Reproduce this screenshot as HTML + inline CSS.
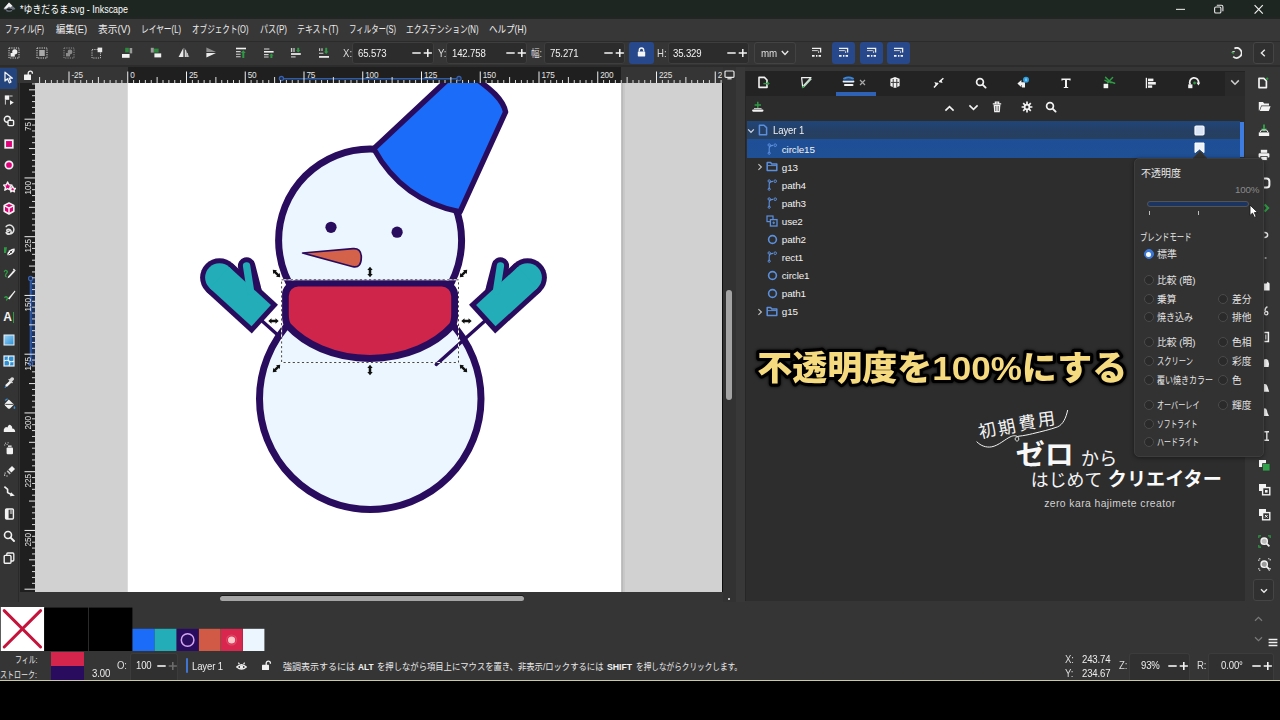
<!DOCTYPE html>
<html lang="ja"><head><meta charset="utf-8"><title>*ゆきだるま.svg - Inkscape</title>
<style>
html,body{margin:0;padding:0;}
body{width:1280px;height:720px;overflow:hidden;background:#353535;position:relative;
 font-family:"Liberation Sans",sans-serif;font-size:10px;color:#e6e6e6;}
.a{position:absolute;}
.t{position:absolute;white-space:nowrap;line-height:1;}
svg{display:block;}
svg text{font-family:"Liberation Sans","Noto Sans CJK JP",sans-serif;}

#title{left:0;top:0;width:1280px;height:17px;background:#1d2621;}
#tsep{left:0;top:16.5px;width:1280px;height:2.5px;background:#212523;}
#menu{left:0;top:19px;width:1280px;height:22px;background:#373737;}
#tbar{left:0;top:41px;width:1280px;height:26px;background:#353535;border-top:1px solid #2b2b2b;box-sizing:border-box;}
#tbar2{left:0;top:64.5px;width:1280px;height:2.5px;background:#2c2c2c;}
.fld{position:absolute;top:41.6px;height:22.6px;background:#2c2c2c;border:1px solid #3e3e3e;border-radius:3px;box-sizing:border-box;}
.num{position:absolute;white-space:nowrap;line-height:1;font-size:10.2px;color:#f2f2f2;letter-spacing:-0.15px;transform-origin:0 50%;transform:scaleX(.94);}
.lbl{position:absolute;white-space:nowrap;line-height:1;font-size:10.2px;color:#dcdcdc;transform-origin:0 50%;transform:scaleX(.94);}
.bbtn{position:absolute;top:41.6px;height:22.4px;background:#27488a;border-radius:3px;}

#ltools{left:0;top:67px;width:18px;height:535px;background:#343434;}
#hruler{left:18px;top:67px;width:704px;height:16px;background:#353535;overflow:hidden;}
#vruler{left:20px;top:83px;width:15px;height:509px;background:#1f1f1f;overflow:hidden;}
#canvas{left:35px;top:83px;width:687px;height:509px;background:#d1d1d1;overflow:hidden;}
#cvedge{left:722px;top:83px;width:1px;height:509px;background:#0c0c0c;}
#vtrough{left:723px;top:67px;width:13px;height:535px;background:#323232;}
#vsep{left:736px;top:67px;width:9px;height:535px;background:#383838;}
.rl{position:absolute;color:#e4e4e4;font-size:8.2px;line-height:1;white-space:nowrap;letter-spacing:-0.1px;}

#panel{left:745px;top:71px;width:499.6px;height:530px;background:#2d2d2d;}
#ptabs{left:745.5px;top:71px;width:499.1px;height:25px;background:#232323;}
#ptool{left:745.5px;top:96px;width:499.1px;height:24.6px;background:#2c2c2c;}
#pleft{left:745px;top:71px;width:1px;height:530px;background:#262626;}
.row{position:absolute;left:747px;width:493px;height:18.4px;}
.rt{position:absolute;white-space:nowrap;line-height:1;font-size:9.9px;color:#f1f1f1;letter-spacing:-0.12px;}
#pop{left:1134.3px;top:158px;width:129.5px;height:298.5px;background:#323232;border:1px solid #3d3d3d;border-radius:5px;box-sizing:border-box;box-shadow:0 1px 4px rgba(0,0,0,.45);}
.rad{position:absolute;width:10px;height:10px;border-radius:50%;background:#2a2a2a;border:1px solid #4a4a4a;box-sizing:border-box;}
#rstrip{left:1244.6px;top:67px;width:35.4px;height:535px;background:#353535;}

#hscroll{left:220.4px;top:596px;width:304px;height:5.4px;border-radius:3px;background:#a5a5a5;box-shadow:0 -1px 0 #1a1a1a;}
#vscroll{left:726.4px;top:290px;width:5.2px;height:110px;border-radius:3px;background:#a4a4a4;}
#status{left:0;top:651px;width:1280px;height:28.6px;background:#353535;}
#yline{left:0;top:679.8px;width:1280px;height:1.4px;background:#c9c9a4;}
#black{left:0;top:681.2px;width:1280px;height:39px;background:#000;}
.sw{position:absolute;top:628.8px;height:22.2px;}
.sfld{position:absolute;top:652.5px;height:27px;background:#303030;border:1px solid #3c3c3c;border-bottom:none;border-radius:3px 3px 0 0;box-sizing:border-box;}
.st{position:absolute;white-space:nowrap;line-height:1;font-size:10.2px;color:#ededed;letter-spacing:-0.15px;transform-origin:0 50%;transform:scaleX(.94);}

#cap{filter:drop-shadow(0 0 1.6px rgba(0,0,0,.9));}
</style></head>
<body>
<div id="title" class="a"></div><div id="tsep" class="a"></div>
<svg class="a" style="left:2.5px;top:2.4px" width="13" height="11" viewBox="0 0 13 11"><path d="M6 0.6L12.2 6.4Q12.6 7.4 11.4 7.6L9 8Q10 9.2 8.2 9.6Q6 10 4 9.6Q2.4 9.2 3.4 8L1.2 7.6Q0.2 7.3 0.7 6.4Z" fill="#6d7480"/><path d="M6 0.6L9.4 3.8L7.4 5.4L6 4.6L3.4 6.8L0.8 6.6Z" fill="#f2f2f2"/><path d="M3 7Q6 6 9.6 7.2Q8 8.8 6.2 8.4Q4.6 8.8 3 7Z" fill="#151a18"/></svg>
<svg class="tx" style="position:absolute;left:13.60px;top:-3.90px;overflow:visible;" width="120.00" height="26.84" viewBox="-6.00 0.00 120.00 26.84" role="img" aria-label="*ゆきだるま.svg - Inkscape"><title>*ゆきだるま.svg - Inkscape</title><text x="0" y="16.6" font-size="10.6" fill="#ffffff" textLength="108" lengthAdjust="spacingAndGlyphs">*ゆきだるま.svg - Inkscape</text></svg>
<svg class="a" style="left:1160px;top:0" width="120" height="18" viewBox="1160 0 120 18"><path d="M1176 9.4H1185" stroke="#cfd2d0" stroke-width="1.2"/><rect x="1214.6" y="7" width="6.3" height="6" rx="1.3" fill="none" stroke="#e8e8e8" stroke-width="1.1"/><path d="M1216.8 5.2H1221.4Q1222.9 5.2 1222.9 6.7V11.2" fill="none" stroke="#e8e8e8" stroke-width="1.1"/><path d="M1254.6 5.2L1262.8 13.6M1262.8 5.2L1254.6 13.6" stroke="#f0f0f0" stroke-width="1.2"/></svg>
<div id="menu" class="a"></div>
<svg class="tx" style="position:absolute;left:-1.00px;top:17.10px;overflow:visible;" width="51.00" height="26.28" viewBox="-6.00 0.00 51.00 26.28" role="img" aria-label="ファイル(F)"><title>ファイル(F)</title><text x="0" y="16.2" font-size="10.2" fill="#ededed" textLength="39" lengthAdjust="spacingAndGlyphs">ファイル(F)</text></svg>
<svg class="tx" style="position:absolute;left:50.00px;top:17.10px;overflow:visible;" width="43.00" height="26.28" viewBox="-6.00 0.00 43.00 26.28" role="img" aria-label="編集(E)"><title>編集(E)</title><text x="0" y="16.2" font-size="10.2" fill="#ededed" textLength="31" lengthAdjust="spacingAndGlyphs">編集(E)</text></svg>
<svg class="tx" style="position:absolute;left:92.00px;top:17.10px;overflow:visible;" width="44.50" height="26.28" viewBox="-6.00 0.00 44.50 26.28" role="img" aria-label="表示(V)"><title>表示(V)</title><text x="0" y="16.2" font-size="10.2" fill="#ededed" textLength="32.5" lengthAdjust="spacingAndGlyphs">表示(V)</text></svg>
<svg class="tx" style="position:absolute;left:135.00px;top:17.10px;overflow:visible;" width="52.00" height="26.28" viewBox="-6.00 0.00 52.00 26.28" role="img" aria-label="レイヤー(L)"><title>レイヤー(L)</title><text x="0" y="16.2" font-size="10.2" fill="#ededed" textLength="40" lengthAdjust="spacingAndGlyphs">レイヤー(L)</text></svg>
<svg class="tx" style="position:absolute;left:186.00px;top:17.10px;overflow:visible;" width="68.50" height="26.28" viewBox="-6.00 0.00 68.50 26.28" role="img" aria-label="オブジェクト(O)"><title>オブジェクト(O)</title><text x="0" y="16.2" font-size="10.2" fill="#ededed" textLength="56.5" lengthAdjust="spacingAndGlyphs">オブジェクト(O)</text></svg>
<svg class="tx" style="position:absolute;left:253.50px;top:17.10px;overflow:visible;" width="39.00" height="26.28" viewBox="-6.00 0.00 39.00 26.28" role="img" aria-label="パス(P)"><title>パス(P)</title><text x="0" y="16.2" font-size="10.2" fill="#ededed" textLength="27" lengthAdjust="spacingAndGlyphs">パス(P)</text></svg>
<svg class="tx" style="position:absolute;left:290.50px;top:17.10px;overflow:visible;" width="53.50" height="26.28" viewBox="-6.00 0.00 53.50 26.28" role="img" aria-label="テキスト(T)"><title>テキスト(T)</title><text x="0" y="16.2" font-size="10.2" fill="#ededed" textLength="41.5" lengthAdjust="spacingAndGlyphs">テキスト(T)</text></svg>
<svg class="tx" style="position:absolute;left:342.50px;top:17.10px;overflow:visible;" width="59.00" height="26.28" viewBox="-6.00 0.00 59.00 26.28" role="img" aria-label="フィルター(S)"><title>フィルター(S)</title><text x="0" y="16.2" font-size="10.2" fill="#ededed" textLength="47" lengthAdjust="spacingAndGlyphs">フィルター(S)</text></svg>
<svg class="tx" style="position:absolute;left:399.50px;top:17.10px;overflow:visible;" width="84.50" height="26.28" viewBox="-6.00 0.00 84.50 26.28" role="img" aria-label="エクステンション(N)"><title>エクステンション(N)</title><text x="0" y="16.2" font-size="10.2" fill="#ededed" textLength="72.5" lengthAdjust="spacingAndGlyphs">エクステンション(N)</text></svg>
<svg class="tx" style="position:absolute;left:482.50px;top:17.10px;overflow:visible;" width="49.50" height="26.28" viewBox="-6.00 0.00 49.50 26.28" role="img" aria-label="ヘルプ(H)"><title>ヘルプ(H)</title><text x="0" y="16.2" font-size="10.2" fill="#ededed" textLength="37.5" lengthAdjust="spacingAndGlyphs">ヘルプ(H)</text></svg>
<div id="tbar" class="a"></div><div id="tbar2" class="a"></div>
<svg class="a" style="left:8.00px;top:46.50px" width="12" height="12" viewBox="0 0 12 12"><rect x="1" y="1" width="10" height="10" fill="none" stroke="#d8d8d8" stroke-width="1" stroke-dasharray="1.2 1.1"/><circle cx="6.8" cy="4.8" r="2.6" fill="#f0f0f0"/><rect x="2.6" y="6" width="4.2" height="3.6" fill="#f0f0f0"/></svg><svg class="a" style="left:35.50px;top:46.50px" width="12" height="12" viewBox="0 0 12 12"><rect x="1" y="1" width="10" height="10" fill="none" stroke="#d8d8d8" stroke-width="1" stroke-dasharray="1.2 1.1"/><path d="M3 4H9M3 6H9M3 8H9" stroke="#e8e8e8" stroke-width="1.1"/><rect x="4" y="3" width="4" height="6" fill="#bdbdbd" opacity=".6"/></svg><svg class="a" style="left:62.50px;top:46.50px" width="12" height="12" viewBox="0 0 12 12"><rect x="1" y="1" width="10" height="10" fill="none" stroke="#8e8e8e" stroke-width="1" stroke-dasharray="1.2 1.1"/><circle cx="7" cy="5" r="2.4" fill="#8a8a8a"/><rect x="3" y="6" width="4" height="3.4" fill="#8a8a8a"/></svg><svg class="a" style="left:90.50px;top:46.50px" width="12" height="12" viewBox="0 0 12 12"><rect x="1" y="2.5" width="8.5" height="8.5" fill="none" stroke="#bdbdbd" stroke-width="1" stroke-dasharray="1.2 1.1"/><rect x="6.6" y="0.6" width="4.6" height="4.6" fill="#e9e9e9"/></svg><svg class="a" style="left:121.00px;top:46.50px" width="12" height="12" viewBox="0 0 12 12"><rect x="4.2" y="0.8" width="3.6" height="4.6" fill="#2c8a3c"/><rect x="8.6" y="1" width="2.6" height="5.4" fill="#9a9a9a"/><rect x="1" y="7" width="7.6" height="3.8" fill="#f2f2f2"/></svg><svg class="a" style="left:149.50px;top:46.50px" width="12" height="12" viewBox="0 0 12 12"><rect x="0.8" y="0.8" width="3" height="4.8" fill="#9a9a9a"/><rect x="4" y="1.6" width="4.6" height="4" fill="#2c8a3c"/><rect x="4.4" y="6.4" width="6.8" height="4" fill="#f2f2f2"/></svg><svg class="a" style="left:178.00px;top:47.00px" width="12" height="11" viewBox="0 0 12 11"><path d="M5.4 0.8V10H0.6Z" fill="#e9e9e9"/><path d="M6.6 0.8V10H11.4Z" fill="#9d9d9d"/><path d="M7.6 3V10M9.2 6V10" stroke="#e9e9e9" stroke-width=".8"/></svg><svg class="a" style="left:204.50px;top:47.00px" width="12" height="11" viewBox="0 0 12 11"><path d="M1.4 0.6L11 4.9H1.4Z" fill="#8f8f8f"/><path d="M1.4 6.1H11L1.4 10.4Z" fill="#ececec"/></svg><svg class="a" style="left:235.00px;top:46.50px" width="12" height="12" viewBox="0 0 12 12"><path d="M1 1.5H11" stroke="#f2f2f2" stroke-width="1.6"/><path d="M1 4.6H5.6M1 7.2H5.6M1 9.8H5.6" stroke="#d0d0d0" stroke-width="1.1"/><path d="M8.3 11V5.2" stroke="#2f9a44" stroke-width="2"/><path d="M5.9 6L8.3 3.2L10.7 6Z" fill="#2f9a44"/></svg><svg class="a" style="left:262.50px;top:46.50px" width="12" height="12" viewBox="0 0 12 12"><path d="M1 2H6.4" stroke="#d0d0d0" stroke-width="1.1"/><path d="M1 4.8H10.6" stroke="#f2f2f2" stroke-width="1.6"/><path d="M1 7.6H5.6M1 10H5.6" stroke="#d0d0d0" stroke-width="1.1"/><path d="M8.4 11V8.2" stroke="#2f9a44" stroke-width="2"/><path d="M6.2 8.6L8.4 6.4L10.6 8.6Z" fill="#2f9a44"/></svg><svg class="a" style="left:290.00px;top:46.50px" width="12" height="12" viewBox="0 0 12 12"><path d="M1.6 1V5" stroke="#d0d0d0" stroke-width="1.4"/><path d="M4 1V5" stroke="#d0d0d0" stroke-width="1.2"/><path d="M8.2 0.8V3.6" stroke="#2f9a44" stroke-width="2"/><path d="M6 3.2L8.2 5.6L10.4 3.2Z" fill="#2f9a44"/><path d="M1 7H10.8" stroke="#f2f2f2" stroke-width="1.7"/><path d="M1 9.9H5.6" stroke="#d0d0d0" stroke-width="1.1"/></svg><svg class="a" style="left:317.50px;top:46.50px" width="12" height="12" viewBox="0 0 12 12"><path d="M1.6 1.2V4M4 1.2V4M1 6.2H5.4" stroke="#d0d0d0" stroke-width="1.1"/><path d="M8.2 0.8V5" stroke="#2f9a44" stroke-width="2"/><path d="M6 4.6L8.2 7L10.4 4.6Z" fill="#2f9a44"/><path d="M1 9.9H11" stroke="#f2f2f2" stroke-width="1.7"/></svg>
<span class="lbl" style="left:343px;top:49.1px">X:</span>
<div class="fld" style="left:352.20px;width:81.60px"></div><span class="num" style="left:357.60px;top:49.1px">65.573</span><svg class="a" style="left:412.00px;top:47.60px" width="22" height="10" viewBox="0 0 22 10"><path d="M0.3 5H8.7M15.8 0.9V9.1M11.7 5H19.9" stroke="#f4f4f4" stroke-width="1.5" fill="none"/></svg>
<span class="lbl" style="left:438.2px;top:49.1px">Y:</span>
<div class="fld" style="left:445.60px;width:81.80px"></div><span class="num" style="left:451.80px;top:49.1px">142.758</span><svg class="a" style="left:505.60px;top:47.60px" width="22" height="10" viewBox="0 0 22 10"><path d="M0.3 5H8.7M15.8 0.9V9.1M11.7 5H19.9" stroke="#f4f4f4" stroke-width="1.5" fill="none"/></svg>
<svg class="tx" style="position:absolute;left:525.00px;top:40.80px;overflow:visible;" width="23.00" height="26.00" viewBox="-6.00 0.00 23.00 26.00" role="img" aria-label="幅:"><title>幅:</title><text x="0" y="16" font-size="10" fill="#dcdcdc" textLength="11" lengthAdjust="spacingAndGlyphs">幅:</text></svg>
<div class="fld" style="left:543.80px;width:81.60px"></div><span class="num" style="left:550.00px;top:49.1px">75.271</span><svg class="a" style="left:603.60px;top:47.60px" width="22" height="10" viewBox="0 0 22 10"><path d="M0.3 5H8.7M15.8 0.9V9.1M11.7 5H19.9" stroke="#f4f4f4" stroke-width="1.5" fill="none"/></svg>
<div class="bbtn" style="left:629.3px;width:24.8px"></div>
<svg class="a" style="left:637.20px;top:47.20px" width="9" height="10" viewBox="0 0 9 10"><path d="M2.3 4.6V3.2A2.2 2.2 0 0 1 6.7 3.2V4.6" fill="none" stroke="#f6f6f6" stroke-width="1.4"/><rect x="0.8" y="4.4" width="7.4" height="5" rx=".6" fill="#f6f6f6"/></svg>
<span class="lbl" style="left:656.8px;top:49.1px">H:</span>
<div class="fld" style="left:667.60px;width:81.20px"></div><span class="num" style="left:672.80px;top:49.1px">35.329</span><svg class="a" style="left:727.00px;top:47.60px" width="22" height="10" viewBox="0 0 22 10"><path d="M0.3 5H8.7M15.8 0.9V9.1M11.7 5H19.9" stroke="#f4f4f4" stroke-width="1.5" fill="none"/></svg>
<div class="fld" style="left:753.5px;width:42.3px;background:#333;border-color:#434343"></div><span class="num" style="left:760.6px;top:48.6px;font-size:10.4px;color:#dedede">mm</span>
<svg class="a" style="left:780.60px;top:50.00px" width="8" height="6" viewBox="0 0 8 6"><path d="M0.8 1L4 4.4L7.2 1" fill="none" stroke="#e8e8e8" stroke-width="1.4"/></svg>
<svg class="a" style="left:810.50px;top:47.00px" width="11" height="11" viewBox="0 0 11 11"><path d="M1 1.4H9.6V5.4" fill="none" stroke="#f0f0f0" stroke-width="1.3"/><path d="M1 3.6H6.6Q7.6 3.6 7.6 4.6V6" fill="none" stroke="#cfcfcf" stroke-width="1"/><path d="M1 8.8H3.6M5 8.8H6.4M7.6 8.8H10" stroke="#f4f4f4" stroke-width="1.8"/></svg>
<div class="bbtn" style="left:832px;width:23px"></div>
<svg class="a" style="left:838.00px;top:47.00px" width="11" height="11" viewBox="0 0 11 11"><path d="M1 1.4H9.6V5.4" fill="none" stroke="#f0f0f0" stroke-width="1.3"/><path d="M1 3.6H6.6Q7.6 3.6 7.6 4.6V6" fill="none" stroke="#cfcfcf" stroke-width="1"/><path d="M1 8.8H3.6M5 8.8H6.4M7.6 8.8H10" stroke="#f4f4f4" stroke-width="1.8"/></svg>
<div class="bbtn" style="left:859.7px;width:23px"></div>
<svg class="a" style="left:865.70px;top:47.00px" width="11" height="11" viewBox="0 0 11 11"><path d="M1 1.4H9.6V5.4" fill="none" stroke="#f0f0f0" stroke-width="1.3"/><path d="M1 3.6H6.6Q7.6 3.6 7.6 4.6V6" fill="none" stroke="#cfcfcf" stroke-width="1"/><path d="M1 8.8H3.6M5 8.8H6.4M7.6 8.8H10" stroke="#f4f4f4" stroke-width="1.8"/></svg>
<div class="bbtn" style="left:887.3px;width:23px"></div>
<svg class="a" style="left:893.30px;top:47.00px" width="11" height="11" viewBox="0 0 11 11"><path d="M1 1.4H9.6V5.4" fill="none" stroke="#f0f0f0" stroke-width="1.3"/><path d="M1 3.6H6.6Q7.6 3.6 7.6 4.6V6" fill="none" stroke="#cfcfcf" stroke-width="1"/><path d="M1 8.8H3.6M5 8.8H6.4M7.6 8.8H10" stroke="#f4f4f4" stroke-width="1.8"/></svg>
<svg class="a" style="left:1229.50px;top:46.50px" width="12" height="12" viewBox="0 0 12 12"><path d="M4.4 1.4A5 5 0 1 1 3.2 9.6" fill="none" stroke="#eeeeee" stroke-width="1.7"/><path d="M1 5.6L3.6 4.2V7.2Z" fill="#3aa04e"/><path d="M2.4 4.6H4.8" stroke="#e0e0e0" stroke-width="1"/></svg>
<div class="fld" style="left:1252.5px;width:21.5px;background:#303030;border-color:#454545"></div>
<svg class="a" style="left:1260.00px;top:48.60px" width="6" height="8" viewBox="0 0 6 8"><path d="M4.8 0.8L1.4 4L4.8 7.2" fill="none" stroke="#e8e8e8" stroke-width="1.4"/></svg>
<div id="ltools" class="a"></div><div class="a" style="left:17.5px;top:67px;width:1px;height:535px;background:#2a2a2a"></div>
<div id="hruler" class="a"><div class="a" style="left:109.75px;top:0;width:493.50px;height:16px;background:#1f1f1f"></div><svg class="a" style="left:0;top:0" width="704" height="16" viewBox="18 67 704 16"><path d="M282 78.8H458" stroke="#2f5ea8" stroke-width="1.5" fill="none"/><circle cx="281.4" cy="78.5" r="2.1" fill="#1d2f52" stroke="#3a64b0" stroke-width="1.1"/><circle cx="459" cy="78.5" r="2.1" fill="#1d2f52" stroke="#3a64b0" stroke-width="1.1"/><path d="M69.00 71.5V83M127.75 71.5V83M186.50 71.5V83M245.25 71.5V83M304.00 71.5V83M362.75 71.5V83M421.50 71.5V83M480.25 71.5V83M539.00 71.5V83M597.75 71.5V83M656.50 71.5V83M715.25 71.5V83" stroke="#f0f0f0" stroke-width="1" fill="none"/><path d="M39.62 77V83M98.38 77V83M157.12 77V83M215.88 77V83M274.62 77V83M333.38 77V83M392.12 77V83M450.88 77V83M509.62 77V83M568.38 77V83M627.12 77V83M685.88 77V83" stroke="#e4e4e4" stroke-width="1" fill="none"/><path d="M45.50 80V83M51.38 80V83M57.25 80V83M63.12 80V83M74.88 80V83M80.75 80V83M86.62 80V83M92.50 80V83M104.25 80V83M110.12 80V83M116.00 80V83M121.88 80V83M133.62 80V83M139.50 80V83M145.38 80V83M151.25 80V83M163.00 80V83M168.88 80V83M174.75 80V83M180.62 80V83M192.38 80V83M198.25 80V83M204.12 80V83M210.00 80V83M221.75 80V83M227.62 80V83M233.50 80V83M239.38 80V83M251.12 80V83M257.00 80V83M262.88 80V83M268.75 80V83M280.50 80V83M286.38 80V83M292.25 80V83M298.12 80V83M309.88 80V83M315.75 80V83M321.62 80V83M327.50 80V83M339.25 80V83M345.12 80V83M351.00 80V83M356.88 80V83M368.62 80V83M374.50 80V83M380.38 80V83M386.25 80V83M398.00 80V83M403.88 80V83M409.75 80V83M415.62 80V83M427.38 80V83M433.25 80V83M439.12 80V83M445.00 80V83M456.75 80V83M462.62 80V83M468.50 80V83M474.38 80V83M486.12 80V83M492.00 80V83M497.88 80V83M503.75 80V83M515.50 80V83M521.38 80V83M527.25 80V83M533.12 80V83M544.88 80V83M550.75 80V83M556.62 80V83M562.50 80V83M574.25 80V83M580.12 80V83M586.00 80V83M591.88 80V83M603.62 80V83M609.50 80V83M615.38 80V83M621.25 80V83M633.00 80V83M638.88 80V83M644.75 80V83M650.62 80V83M662.38 80V83M668.25 80V83M674.12 80V83M680.00 80V83M691.75 80V83M697.62 80V83M703.50 80V83M709.38 80V83M721.12 80V83" stroke="#d8d8d8" stroke-width="1" fill="none"/></svg><span class="rl" style="left:53.40px;top:4.6px">-25</span><span class="rl" style="left:112.15px;top:4.6px">0</span><span class="rl" style="left:170.90px;top:4.6px">25</span><span class="rl" style="left:229.65px;top:4.6px">50</span><span class="rl" style="left:288.40px;top:4.6px">75</span><span class="rl" style="left:347.15px;top:4.6px">100</span><span class="rl" style="left:405.90px;top:4.6px">125</span><span class="rl" style="left:464.65px;top:4.6px">150</span><span class="rl" style="left:523.40px;top:4.6px">175</span><span class="rl" style="left:582.15px;top:4.6px">200</span><span class="rl" style="left:640.90px;top:4.6px">225</span><span class="rl" style="left:699.65px;top:4.6px">250</span></div>
<div id="vruler" class="a"><svg class="a" style="left:0;top:0" width="15" height="509" viewBox="20 83 15 509"><rect x="29.4" y="279" width="5.6" height="84" fill="#1f3a6c" opacity=".8"/><path d="M30.8 279V363" stroke="#2d5aa6" stroke-width="1.8" fill="none"/><circle cx="30.6" cy="278.4" r="2.1" fill="#1d2f52" stroke="#3a64b0" stroke-width="1.1"/><circle cx="30.6" cy="363.6" r="2.1" fill="#1d2f52" stroke="#3a64b0" stroke-width="1.1"/><path d="M24.5 119.20H35M24.5 177.95H35M24.5 236.70H35M24.5 295.45H35M24.5 354.20H35M24.5 412.95H35M24.5 471.70H35M24.5 530.45H35M24.5 589.20H35" stroke="#f0f0f0" stroke-width="1" fill="none"/><path d="M29 89.83H35M29 148.57H35M29 207.32H35M29 266.07H35M29 324.82H35M29 383.57H35M29 442.32H35M29 501.07H35M29 559.83H35" stroke="#e4e4e4" stroke-width="1" fill="none"/><path d="M32 83.95H35M32 95.70H35M32 101.58H35M32 107.45H35M32 113.33H35M32 125.08H35M32 130.95H35M32 136.82H35M32 142.70H35M32 154.45H35M32 160.32H35M32 166.20H35M32 172.07H35M32 183.82H35M32 189.70H35M32 195.57H35M32 201.45H35M32 213.20H35M32 219.07H35M32 224.95H35M32 230.82H35M32 242.57H35M32 248.45H35M32 254.32H35M32 260.20H35M32 271.95H35M32 277.82H35M32 283.70H35M32 289.57H35M32 301.32H35M32 307.20H35M32 313.07H35M32 318.95H35M32 330.70H35M32 336.57H35M32 342.45H35M32 348.32H35M32 360.07H35M32 365.95H35M32 371.82H35M32 377.70H35M32 389.45H35M32 395.32H35M32 401.20H35M32 407.07H35M32 418.82H35M32 424.70H35M32 430.57H35M32 436.45H35M32 448.20H35M32 454.07H35M32 459.95H35M32 465.82H35M32 477.57H35M32 483.45H35M32 489.32H35M32 495.20H35M32 506.95H35M32 512.83H35M32 518.70H35M32 524.58H35M32 536.33H35M32 542.20H35M32 548.08H35M32 553.95H35M32 565.70H35M32 571.58H35M32 577.45H35M32 583.33H35" stroke="#d8d8d8" stroke-width="1" fill="none"/></svg><span class="rl" style="left:4.6px;top:38.80px;writing-mode:vertical-rl;transform:rotate(180deg)">75</span><span class="rl" style="left:4.6px;top:97.55px;writing-mode:vertical-rl;transform:rotate(180deg)">100</span><span class="rl" style="left:4.6px;top:156.30px;writing-mode:vertical-rl;transform:rotate(180deg)">125</span><span class="rl" style="left:4.6px;top:215.05px;writing-mode:vertical-rl;transform:rotate(180deg)">150</span><span class="rl" style="left:4.6px;top:273.80px;writing-mode:vertical-rl;transform:rotate(180deg)">175</span><span class="rl" style="left:4.6px;top:332.55px;writing-mode:vertical-rl;transform:rotate(180deg)">200</span><span class="rl" style="left:4.6px;top:391.30px;writing-mode:vertical-rl;transform:rotate(180deg)">225</span><span class="rl" style="left:4.6px;top:450.05px;writing-mode:vertical-rl;transform:rotate(180deg)">250</span></div>
<div id="canvas" class="a"><svg class="a" style="left:0;top:0" width="687" height="509" viewBox="35 83 687 509"><rect x="127.75" y="0" width="493.5" height="600" fill="#fff"/><rect x="621.25" y="0" width="2.2" height="592" fill="#b9b9b9"/><rect x="623.4" y="0" width="1.6" height="592" fill="#c8c8c8"/><g><path d="M261 320L310.75 364.4" stroke="#2a0c5e" stroke-width="3.4" stroke-linecap="round" fill="none"/><circle cx="219.50" cy="277.60" r="19.40" fill="#2a0c5e"/><path d="M219.50 277.60L264.92 319.07" stroke="#2a0c5e" stroke-width="38.80" fill="none"/><path d="M246.60 266.00L252.40 288.50" stroke="#2a0c5e" stroke-width="17.40" stroke-linecap="round" fill="none"/><path d="M255.5 280L262 289.5L252 292Z" fill="#2a0c5e"/><circle cx="219.50" cy="277.60" r="14.40" fill="#22adb8"/><path d="M219.50 277.60L261.22 315.70" stroke="#22adb8" stroke-width="28.80" fill="none"/><path d="M246.60 266.00L250.50 291.00" stroke="#22adb8" stroke-width="7.40" stroke-linecap="round" fill="none"/></g><circle cx="370.25" cy="398.7" r="110.75" fill="#ebf6fe" stroke="#2a0c5e" stroke-width="7"/><circle cx="370.1" cy="240.5" r="91.5" fill="#ebf6fe" stroke="#2a0c5e" stroke-width="7"/><g transform="translate(747 0) scale(-1 1)"><path d="M261 320L310.75 364.4" stroke="#2a0c5e" stroke-width="3.4" stroke-linecap="round" fill="none"/><circle cx="219.50" cy="277.60" r="19.40" fill="#2a0c5e"/><path d="M219.50 277.60L264.92 319.07" stroke="#2a0c5e" stroke-width="38.80" fill="none"/><path d="M246.60 266.00L252.40 288.50" stroke="#2a0c5e" stroke-width="17.40" stroke-linecap="round" fill="none"/><path d="M255.5 280L262 289.5L252 292Z" fill="#2a0c5e"/><circle cx="219.50" cy="277.60" r="14.40" fill="#22adb8"/><path d="M219.50 277.60L261.22 315.70" stroke="#22adb8" stroke-width="28.80" fill="none"/><path d="M246.60 266.00L250.50 291.00" stroke="#22adb8" stroke-width="7.40" stroke-linecap="round" fill="none"/></g><path d="M373.75 148.75L460.8 67.3L478 80C490 89 503 99 505.6 112L460 211.9Q402.1 200.5 373.75 148.75Z" fill="#1c6cfa" stroke="#2a0c5e" stroke-width="5.4" stroke-linejoin="round"/><circle cx="331" cy="227.3" r="5.6" fill="#2a0c5e"/><circle cx="397.1" cy="232.2" r="5.6" fill="#2a0c5e"/><path d="M302.6 253L353 248.6Q361 248 361.3 256.5Q361.5 268.3 353 266.7Z" fill="#d4614a" stroke="#2a0c5e" stroke-width="1.7" stroke-linejoin="round"/><path d="M298.3 283H441.7A13 13 0 0 1 454.7 296V314Q454.7 322 452 325.9A100 76 0 0 1 288 325.9Q285.3 322 285.3 314V296A13 13 0 0 1 298.3 283Z" fill="#d0254a" stroke="#2a0c5e" stroke-width="7" stroke-linejoin="round"/><rect x="281.6" y="279.8" width="176.9" height="82.7" fill="none" stroke="#fff" stroke-width="1"/><rect x="281.6" y="279.8" width="176.9" height="82.7" fill="none" stroke="#333" stroke-width="0.9" stroke-dasharray="2.2 2.4"/><path transform="translate(276.5 273.5) rotate(45)" d="M-5.2 0L-2 -2.7V-1.25H2V-2.7L5.2 0L2 2.7V1.25H-2V2.7Z" fill="#111"/><path transform="translate(463.5 273.5) rotate(-45)" d="M-5.2 0L-2 -2.7V-1.25H2V-2.7L5.2 0L2 2.7V1.25H-2V2.7Z" fill="#111"/><path transform="translate(276.5 368.5) rotate(-45)" d="M-5.2 0L-2 -2.7V-1.25H2V-2.7L5.2 0L2 2.7V1.25H-2V2.7Z" fill="#111"/><path transform="translate(463.5 368.5) rotate(45)" d="M-5.2 0L-2 -2.7V-1.25H2V-2.7L5.2 0L2 2.7V1.25H-2V2.7Z" fill="#111"/><path transform="translate(370 272) rotate(90)" d="M-5.2 0L-2 -2.7V-1.25H2V-2.7L5.2 0L2 2.7V1.25H-2V2.7Z" fill="#111"/><path transform="translate(370 370) rotate(90)" d="M-5.2 0L-2 -2.7V-1.25H2V-2.7L5.2 0L2 2.7V1.25H-2V2.7Z" fill="#111"/><path transform="translate(273.5 321) rotate(0)" d="M-5.2 0L-2 -2.7V-1.25H2V-2.7L5.2 0L2 2.7V1.25H-2V2.7Z" fill="#111"/><path transform="translate(466.5 321) rotate(0)" d="M-5.2 0L-2 -2.7V-1.25H2V-2.7L5.2 0L2 2.7V1.25H-2V2.7Z" fill="#111"/></svg></div><div id="cvedge" class="a"></div><div id="vtrough" class="a"></div><div id="vsep" class="a"></div>
<svg class="a" style="left:724px;top:70px" width="11" height="10" viewBox="0 0 11 10"><rect x="1" y="1" width="9" height="6.4" rx="1" fill="none" stroke="#e6e6e6" stroke-width="1.2"/><path d="M3.4 8.8H7.6" stroke="#e6e6e6" stroke-width="1.2"/></svg>
<div class="a" style="left:0;top:68px;width:16.5px;height:20.5px;background:#24447d;border-radius:0 2px 2px 0"></div><svg class="a" style="left:3.00px;top:71.10px" width="12" height="13" viewBox="0 0 12 13"><path d="M2 1.2V10L4.5 7.8L6.3 11.8L8 11L6.2 7.2H9.4Z" fill="none" stroke="#f2f2f2" stroke-width="1.3" stroke-linejoin="round"/></svg><svg class="a" style="left:3.00px;top:93.50px" width="12" height="12" viewBox="0 0 12 12"><rect x="1.8" y="1.4" width="4.4" height="4.4" fill="#f2f2f2"/><path d="M2.4 6V10.6M6.4 2H9.6" stroke="#cfcfcf" stroke-width="1"/><path d="M7 6.2L10.8 8.6L7 11Z" fill="#f2f2f2"/></svg><svg class="a" style="left:3.00px;top:115.00px" width="12" height="12" viewBox="0 0 12 12"><circle cx="4.3" cy="4.3" r="3" fill="none" stroke="#f2f2f2" stroke-width="1.4"/><rect x="5" y="5.2" width="5.6" height="5.4" rx="1" fill="#343434" stroke="#f2f2f2" stroke-width="1.4"/></svg><svg class="a" style="left:3.00px;top:138.00px" width="12" height="12" viewBox="0 0 12 12"><rect x="2.2" y="2.2" width="7.6" height="7.6" fill="#e2007a" stroke="#f2f2f2" stroke-width="1.7"/></svg><svg class="a" style="left:3.00px;top:159.00px" width="12" height="12" viewBox="0 0 12 12"><circle cx="6" cy="6" r="3.7" fill="#e2007a" stroke="#f2f2f2" stroke-width="1.7"/></svg><svg class="a" style="left:2.50px;top:180.50px" width="13" height="12" viewBox="0 0 13 12"><path d="M4.6 1L6 3.8L9 4.1L6.9 6.2L7.6 9.2L4.6 7.6L1.8 9.2L2.5 6.2L0.6 4.1L3.4 3.8Z" fill="#e2007a" stroke="#f2f2f2" stroke-width="1.4" stroke-linejoin="round"/><path d="M9.6 5.2L10.6 7.2L12.6 7.5L11.1 8.9L11.5 10.9L9.6 9.9L7.7 10.9L8.1 8.9L6.6 7.5L8.6 7.2Z" fill="#e2007a" stroke="#f2f2f2" stroke-width="1.3" stroke-linejoin="round"/></svg><svg class="a" style="left:3.00px;top:201.50px" width="12" height="13" viewBox="0 0 12 13"><path d="M6 1L10.8 3.4V9.2L6 12L1.2 9.2V3.4Z" fill="#e2007a" stroke="#f2f2f2" stroke-width="1.6" stroke-linejoin="round"/><path d="M1.4 3.6L6 6.2L10.6 3.6M6 6.2V11.6" stroke="#f2f2f2" stroke-width="1.5" fill="none"/></svg><svg class="a" style="left:3.00px;top:223.50px" width="12" height="12" viewBox="0 0 12 12"><path d="M6.2 6.4A1.2 1.2 0 1 1 5 5.2A2.6 2.6 0 1 1 3 8.2A4.4 4.4 0 1 0 3.2 2.6" fill="none" stroke="#e4e4e4" stroke-width="1.5" stroke-linecap="round"/></svg><svg class="a" style="left:2.50px;top:246.00px" width="13" height="12" viewBox="0 0 13 12"><path d="M1 1.2L4 1.2L3 7L1 7Z" fill="#2f9a44"/><path d="M11.6 2.4Q12.4 5.6 9 8Q6.4 9.8 4.4 9.2Q4 6.4 6.6 4.2Q9 2.2 11.6 2.4Z" fill="#f2f2f2"/><path d="M5.6 8.4L9.4 4.6" stroke="#3a3a3a" stroke-width="1"/><circle cx="8" cy="6" r="1" fill="#3a3a3a"/></svg><svg class="a" style="left:2.50px;top:267.00px" width="13" height="13" viewBox="0 0 13 13"><path d="M1.2 5Q2.2 2.4 4 4Q5 5 3 7Q1.6 9 3.6 10" fill="none" stroke="#2f9a44" stroke-width="1.3"/><path d="M5.2 9.4L10.6 3.2L12 4.6L6.4 10.6L4.6 11.2Z" fill="#f2f2f2"/><path d="M9.8 2.4L10.8 1.4L12.8 3.4L11.8 4.4Z" fill="#e8e8e8"/></svg><svg class="a" style="left:2.50px;top:288.50px" width="13" height="13" viewBox="0 0 13 13"><path d="M1.4 8.8Q3 6.6 4.4 8.6Q5 10.2 3.2 11.4" fill="none" stroke="#2f9a44" stroke-width="1.5"/><path d="M5 9.4L11.8 1.6L12.4 2.4L6.4 10.6Z" fill="#f2f2f2"/></svg><span class="t" style="left:3.2px;top:311.3px;font-size:12px;font-weight:bold;color:#f4f4f4">A</span><div class="a" style="left:13px;top:311.5px;width:1.3px;height:11.5px;background:#2f9a44"></div><svg class="a" style="left:3.00px;top:333.50px" width="12" height="12" viewBox="0 0 12 12"><defs><linearGradient id="lg1" x1="0" y1="0" x2="1" y2="1"><stop offset="0" stop-color="#9ed4f4"/><stop offset="1" stop-color="#2a8fd6"/></linearGradient></defs><rect x="1" y="1" width="10" height="10" fill="url(#lg1)" stroke="#e9f4fb" stroke-width="1"/></svg><svg class="a" style="left:3.00px;top:355.00px" width="12" height="12" viewBox="0 0 12 12"><rect x="1" y="1" width="10" height="10" fill="#2f8fd3" stroke="#eaf3fa" stroke-width="1.2"/><path d="M1 6Q4 4.4 6 6T11 6M6 1Q4.4 4 6 6T6 11" fill="none" stroke="#eaf3fa" stroke-width="1.1"/></svg><svg class="a" style="left:3.00px;top:376.00px" width="12" height="13" viewBox="0 0 12 13"><path d="M2 11.4L2.6 8.8L7 4.4L8.8 6.2L4.4 10.6Z" fill="#f2f2f2"/><path d="M6.6 3.2L8.2 1.6Q9.4 0.6 10.6 1.8Q11.6 3 10.6 4L9 5.6L10 6.6L9 7.4L5.2 3.6L6 2.8Z" fill="#d8d8d8"/><path d="M1.4 12L2.4 9.4L3.8 10.8Z" fill="#3a8fd6"/></svg><svg class="a" style="left:2.50px;top:398.00px" width="13" height="12" viewBox="0 0 13 12"><path d="M5.8 1.6L11 6.4L7 10.4Q6 11.2 5 10.4L2 7.6Q1.2 6.6 2 5.6Z" fill="#f2f2f2"/><path d="M2.4 6.4H10.6" stroke="#3a3a3a" stroke-width=".9"/><path d="M11.4 7.8Q12.8 9.8 12.2 10.6Q11.4 11.4 10.6 10.6Q10.2 9.8 11.4 7.8Z" fill="#3a8fd6"/><path d="M2 2.6L4.6 0.8" stroke="#3a8fd6" stroke-width="1.2"/></svg><svg class="a" style="left:2.50px;top:421.50px" width="13" height="11" viewBox="0 0 13 11"><path d="M0.8 10V7.6Q2 4 4.4 5.4Q5.6 1.4 8 3.4Q9.6 4.6 9.2 6.4Q12 6.2 12.2 10Z" fill="#f2f2f2"/></svg><svg class="a" style="left:3.00px;top:442.00px" width="12" height="13" viewBox="0 0 12 13"><rect x="3.6" y="5.4" width="6.4" height="6.8" rx="1" fill="#f2f2f2"/><rect x="5" y="3.4" width="3.6" height="1.6" fill="#cfcfcf"/><path d="M2 1.2H3M4.6 0.8H5.6M1.2 3H2.2M3.6 2.4H4.6" stroke="#d0d0d0" stroke-width="1"/></svg><svg class="a" style="left:2.50px;top:463.50px" width="13" height="13" viewBox="0 0 13 13"><path d="M5.4 5.6L9 2L12 5L8.4 8.6Z" fill="#f2f2f2"/><path d="M4.8 6.2L7.8 9.2L6.6 10.4L3.6 7.4Z" fill="#bdbdbd"/><path d="M1 11.2H2.2M3.4 12H4.6M1.6 9.2H2.6" stroke="#e0e0e0" stroke-width="1.2"/></svg><svg class="a" style="left:2.50px;top:485.00px" width="13" height="12" viewBox="0 0 13 12"><path d="M1.4 1.6L4.6 4.4V7.6L9.4 10" fill="none" stroke="#f2f2f2" stroke-width="1.6" stroke-linejoin="round"/><path d="M8 7.2L11.8 10.8L7 11.2Z" fill="#f2f2f2"/></svg><svg class="a" style="left:3.50px;top:508.00px" width="11" height="12" viewBox="0 0 11 12"><rect x="1.6" y="1" width="7.8" height="10" rx="1" fill="none" stroke="#f2f2f2" stroke-width="1.4"/><path d="M5.8 3H8.4M5.8 5H8.4" stroke="#f2f2f2" stroke-width="1"/><rect x="1.6" y="1" width="3" height="10" fill="#f2f2f2"/></svg><svg class="a" style="left:3.00px;top:530.00px" width="12" height="12" viewBox="0 0 12 12"><circle cx="5" cy="5" r="3.5" fill="none" stroke="#f2f2f2" stroke-width="1.6"/><path d="M7.6 7.6L11 11" stroke="#f2f2f2" stroke-width="1.9" stroke-linecap="round"/></svg><svg class="a" style="left:3.00px;top:551.50px" width="12" height="12" viewBox="0 0 12 12"><rect x="3.8" y="1" width="7" height="8" rx="1" fill="none" stroke="#f2f2f2" stroke-width="1.3"/><rect x="1.2" y="3.4" width="6.8" height="7.8" rx="1" fill="#343434" stroke="#f2f2f2" stroke-width="1.4"/></svg><svg class="a" style="left:23.00px;top:70.00px" width="11" height="11" viewBox="0 0 11 11"><path d="M5.2 5V3.2A2.1 2.1 0 0 1 9.4 3.2V3.8" fill="none" stroke="#f2f2f2" stroke-width="1.3"/><rect x="1" y="4.6" width="7" height="5.4" rx=".5" fill="#f2f2f2"/></svg>
<div id="rstrip" class="a"></div>
<div id="panel" class="a"></div><div id="pleft" class="a"></div>
<div id="ptabs" class="a"></div><div id="ptool" class="a"></div>
<svg class="a" style="left:756.50px;top:76.00px" width="14" height="13" viewBox="0 0 14 13"><path d="M2 1.4H7.4L10 4V11.4H2Z" fill="none" stroke="#f2f2f2" stroke-width="1.6" stroke-linejoin="round"/><path d="M6.4 7.6H11.6" stroke="#2f9a44" stroke-width="1.4"/><path d="M10.4 5.6L12.8 7.6L10.4 9.6Z" fill="#2f9a44"/></svg><svg class="a" style="left:799.50px;top:76.00px" width="13" height="13" viewBox="0 0 13 13"><path d="M1.6 1.6H11L2.6 10.6Z" fill="none" stroke="#f2f2f2" stroke-width="1.2" stroke-linejoin="round"/><path d="M3 11.4L11.2 2.6" stroke="#bcdcc6" stroke-width="1.6"/><path d="M2.2 12L4 10" stroke="#2f9a44" stroke-width="1.6"/></svg><svg class="a" style="left:841.50px;top:76.10px" width="13" height="12" viewBox="0 0 13 12"><path d="M2 2.6Q6.5 0.4 11 2.6" fill="none" stroke="#3c86d8" stroke-width="1.8" stroke-linecap="round"/><path d="M1.6 5.6H11.4" stroke="#e8eef6" stroke-width="2" stroke-linecap="round"/><path d="M3 9H10.4" stroke="#f2f2f2" stroke-width="2.2" stroke-linecap="round"/><path d="M1.8 4H11.2" stroke="#2a62b0" stroke-width="1.2"/></svg><svg class="a" style="left:858.80px;top:79.40px" width="7" height="7" viewBox="0 0 7 7"><path d="M1 1L6 6M6 1L1 6" stroke="#a9a9a9" stroke-width="1.2"/></svg><div class="a" style="left:836px;top:92.2px;width:40.2px;height:3.6px;background:#2f62b5"></div><svg class="a" style="left:889.00px;top:76.00px" width="12" height="13" viewBox="0 0 12 13"><path d="M6 1L10.6 2.8V10L6 12L1.4 10V2.8Z" fill="#f2f2f2"/><path d="M4.2 3V11M7.8 3V11M2 6.4H10" stroke="#3a3a3a" stroke-width="1"/></svg><svg class="a" style="left:932.10px;top:76.50px" width="13" height="12" viewBox="0 0 13 12"><path d="M2 10.6L6 6M7.4 4.8L11.4 1.2" stroke="#f2f2f2" stroke-width="1.5"/><path d="M2.4 5L6.6 6.2L4 8.8ZM10.6 6L6.6 5L9.2 2.6Z" fill="#f2f2f2"/></svg><svg class="a" style="left:975.00px;top:76.50px" width="12" height="12" viewBox="0 0 12 12"><circle cx="5" cy="5" r="3.4" fill="none" stroke="#f2f2f2" stroke-width="1.7"/><path d="M7.6 7.6L10.6 10.6" stroke="#f2f2f2" stroke-width="1.9" stroke-linecap="round"/></svg><svg class="a" style="left:1016.00px;top:76.00px" width="14" height="13" viewBox="0 0 14 13"><path d="M1.4 7.6L5.4 4V6.2H9V11.4H6V9H5.4V11.2Z" fill="#f2f2f2"/><circle cx="10" cy="3.8" r="3" fill="#2e9fe0"/><path d="M10 2.4V5.2" stroke="#bfe3f7" stroke-width="1"/></svg><svg class="a" style="left:1060.00px;top:76.50px" width="12" height="12" viewBox="0 0 12 12"><path d="M1.4 1.4H10.6V3.6H9.4V2.9H7V10H8.2V11H3.8V10H5V2.9H2.6V3.6H1.4Z" fill="#f2f2f2"/></svg><svg class="a" style="left:1101.50px;top:76.00px" width="14" height="13" viewBox="0 0 14 13"><path d="M3.6 1.4L9 6.8M10.6 1.6L5.6 6.8M8 5.6L12.6 7.2M3 4.4L7 6.2" stroke="#2f9a44" stroke-width="1.5" stroke-linecap="round"/><rect x="1.6" y="7.8" width="4.6" height="4.4" fill="#f2f2f2"/></svg><svg class="a" style="left:1145.00px;top:76.50px" width="12" height="12" viewBox="0 0 12 12"><path d="M1.4 0.8V11.2" stroke="#f2f2f2" stroke-width="1.3"/><rect x="3" y="1.6" width="5.4" height="2.6" fill="#f2f2f2"/><rect x="3" y="5" width="7.8" height="2.6" fill="#f2f2f2"/><rect x="3" y="8.4" width="4.2" height="2.4" fill="#f2f2f2"/></svg><svg class="a" style="left:1187.00px;top:76.00px" width="14" height="13" viewBox="0 0 14 13"><path d="M3.4 8.6A4.4 4.4 0 1 1 11.4 7.2" fill="none" stroke="#f2f2f2" stroke-width="1.7"/><path d="M9.4 6.8L11.6 9.6L13.2 6.4Z" fill="#f2f2f2"/><rect x="1.2" y="8.4" width="4.2" height="3.8" fill="#f2f2f2"/><circle cx="7.6" cy="7" r="1.4" fill="#2f9a44"/></svg><div class="a" style="left:1224.5px;top:71.5px;width:20px;height:24px;background:#2a2a2a"></div><svg class="a" style="left:1230.00px;top:79.20px" width="10" height="7" viewBox="0 0 10 7"><path d="M1.2 1.4L5 5.2L8.8 1.4" fill="none" stroke="#cdcdcd" stroke-width="1.5"/></svg>
<svg class="a" style="left:751.50px;top:101.00px" width="12" height="12" viewBox="0 0 12 12"><path d="M5.8 0.8V7.4M2.6 4H9" stroke="#2f9a44" stroke-width="1.5"/><path d="M1.2 9.6H10.4" stroke="#f2f2f2" stroke-width="2.2" stroke-linecap="round"/><path d="M2 7.6H9.6" stroke="#cfcfcf" stroke-width="1"/></svg><svg class="a" style="left:943.90px;top:104.70px" width="11" height="7" viewBox="0 0 11 7"><path d="M1.4 5.6L5.5 1.6L9.6 5.6" fill="none" stroke="#f2f2f2" stroke-width="1.6"/></svg><svg class="a" style="left:967.50px;top:103.90px" width="11" height="7" viewBox="0 0 11 7"><path d="M1.4 1.4L5.5 5.4L9.6 1.4" fill="none" stroke="#f2f2f2" stroke-width="1.6"/></svg><svg class="a" style="left:992.30px;top:101.00px" width="10" height="12" viewBox="0 0 10 12"><path d="M0.8 2.8H9.2M3.4 2.6V1.2H6.6V2.6" fill="none" stroke="#f2f2f2" stroke-width="1.3"/><path d="M1.6 3.8H8.4L7.8 11.2H2.2Z" fill="#f2f2f2"/><path d="M3.8 5V10M6.2 5V10" stroke="#3a3a3a" stroke-width=".8"/></svg><svg class="a" style="left:1021.00px;top:101.20px" width="12" height="12" viewBox="0 0 12 12"><circle cx="6" cy="6" r="3.3" fill="#f2f2f2"/><path d="M6 0.6V11.4M0.6 6H11.4M2.2 2.2L9.8 9.8M9.8 2.2L2.2 9.8" stroke="#f2f2f2" stroke-width="1.7"/><circle cx="6" cy="6" r="1.5" fill="#2c2c2c"/></svg><svg class="a" style="left:1045.00px;top:101.40px" width="12" height="12" viewBox="0 0 12 12"><circle cx="5" cy="5" r="3.4" fill="none" stroke="#f2f2f2" stroke-width="1.7"/><path d="M7.6 7.6L10.6 10.6" stroke="#f2f2f2" stroke-width="1.9" stroke-linecap="round"/></svg>
<div class="row" style="top:120.6px;height:18.3px;background:linear-gradient(#1f4679,#253f63 55%,#27405f)"></div><div class="row" style="top:138.8px;height:19px;background:linear-gradient(#1e4f97,#1f4f94)"></div><div class="a" style="left:1240px;top:121.5px;width:4.3px;height:17px;background:#3f7ce0"></div><div class="a" style="left:1240px;top:139.4px;width:4.3px;height:18px;background:#3f7ce0"></div><svg class="a" style="left:746.50px;top:128.20px" width="8" height="6" viewBox="0 0 8 6"><path d="M1.2 1.4L4 4.4L6.8 1.4" fill="none" stroke="#cfd6e2" stroke-width="1.3"/></svg><svg class="a" style="left:758.20px;top:124.40px" width="10" height="12" viewBox="0 0 10 12"><path d="M1.4 1.2H6L8.6 3.6V10.8H1.4Z" fill="none" stroke="#5b8fdd" stroke-width="1.5" stroke-linejoin="round"/></svg><span class="rt" style="left:772.8px;top:126.1px;font-size:10.4px;transform-origin:0 50%;transform:scaleX(.92)">Layer 1</span><svg class="a" style="left:1194.10px;top:124.50px" width="11" height="11" viewBox="0 0 11 11"><rect x="1" y="1" width="9" height="9" rx="1.2" fill="#d9e4f4" stroke="#f7f9fc" stroke-width="1.2"/></svg><svg class="a" style="left:1194.10px;top:142.20px" width="11" height="12" viewBox="0 0 11 12"><path d="M1 1H10V10.6L5.5 7L1 10.6Z" fill="#eef3fa" stroke="#ffffff" stroke-width="1" stroke-linejoin="round"/></svg><svg class="a" style="left:766.50px;top:142.90px" width="11" height="12" viewBox="0 0 11 12"><path d="M2.2 10V5.4Q2.2 2.6 6 2.4" fill="none" stroke="#5b8fdd" stroke-width="1.1"/><circle cx="2.2" cy="2" r="1.2" fill="none" stroke="#5b8fdd" stroke-width="1"/><circle cx="8.2" cy="2.2" r="1.3" fill="none" stroke="#5b8fdd" stroke-width="1"/><circle cx="2.2" cy="10.2" r="1.1" fill="none" stroke="#5b8fdd" stroke-width="1"/></svg><span class="rt" style="left:781.8px;top:144.90px;">circle15</span><svg class="a" style="left:756.80px;top:163.35px" width="6" height="8" viewBox="0 0 6 8"><path d="M1.4 1.2L4.4 4L1.4 6.8" fill="none" stroke="#c4c4c4" stroke-width="1.1"/></svg><svg class="a" style="left:765.80px;top:161.45px" width="12" height="11" viewBox="0 0 12 11"><path d="M1.2 1.6H4.6L5.8 3H10.8V9.6H1.2Z" fill="none" stroke="#5b8fdd" stroke-width="1.5" stroke-linejoin="round"/><path d="M1.2 4.6H10.8" stroke="#5b8fdd" stroke-width="1"/></svg><span class="rt" style="left:781.8px;top:162.95px;">g13</span><svg class="a" style="left:766.50px;top:179.00px" width="11" height="12" viewBox="0 0 11 12"><path d="M2.2 10V5.4Q2.2 2.6 6 2.4" fill="none" stroke="#5b8fdd" stroke-width="1.1"/><circle cx="2.2" cy="2" r="1.2" fill="none" stroke="#5b8fdd" stroke-width="1"/><circle cx="8.2" cy="2.2" r="1.3" fill="none" stroke="#5b8fdd" stroke-width="1"/><circle cx="2.2" cy="10.2" r="1.1" fill="none" stroke="#5b8fdd" stroke-width="1"/></svg><span class="rt" style="left:781.8px;top:181.00px;">path4</span><svg class="a" style="left:766.50px;top:197.05px" width="11" height="12" viewBox="0 0 11 12"><path d="M2.2 10V5.4Q2.2 2.6 6 2.4" fill="none" stroke="#5b8fdd" stroke-width="1.1"/><circle cx="2.2" cy="2" r="1.2" fill="none" stroke="#5b8fdd" stroke-width="1"/><circle cx="8.2" cy="2.2" r="1.3" fill="none" stroke="#5b8fdd" stroke-width="1"/><circle cx="2.2" cy="10.2" r="1.1" fill="none" stroke="#5b8fdd" stroke-width="1"/></svg><span class="rt" style="left:781.8px;top:199.05px;">path3</span><svg class="a" style="left:766.00px;top:215.10px" width="12" height="12" viewBox="0 0 12 12"><rect x="1" y="1" width="6" height="5.6" fill="none" stroke="#5b8fdd" stroke-width="1.2"/><rect x="4.4" y="4.6" width="6.6" height="6.4" fill="#2d2d2d" stroke="#5b8fdd" stroke-width="1.3"/><path d="M6.4 7.8H9M7.7 6.5V9.1" stroke="#5b8fdd" stroke-width="1"/></svg><span class="rt" style="left:781.8px;top:217.10px;">use2</span><svg class="a" style="left:766.50px;top:233.65px" width="11" height="11" viewBox="0 0 11 11"><circle cx="5.5" cy="5.5" r="3.9" fill="none" stroke="#5b8fdd" stroke-width="1.6"/></svg><span class="rt" style="left:781.8px;top:235.15px;">path2</span><svg class="a" style="left:766.50px;top:251.20px" width="11" height="12" viewBox="0 0 11 12"><path d="M2.2 10V5.4Q2.2 2.6 6 2.4" fill="none" stroke="#5b8fdd" stroke-width="1.1"/><circle cx="2.2" cy="2" r="1.2" fill="none" stroke="#5b8fdd" stroke-width="1"/><circle cx="8.2" cy="2.2" r="1.3" fill="none" stroke="#5b8fdd" stroke-width="1"/><circle cx="2.2" cy="10.2" r="1.1" fill="none" stroke="#5b8fdd" stroke-width="1"/></svg><span class="rt" style="left:781.8px;top:253.20px;">rect1</span><svg class="a" style="left:766.50px;top:269.75px" width="11" height="11" viewBox="0 0 11 11"><circle cx="5.5" cy="5.5" r="3.9" fill="none" stroke="#5b8fdd" stroke-width="1.6"/></svg><span class="rt" style="left:781.8px;top:271.25px;">circle1</span><svg class="a" style="left:766.50px;top:287.80px" width="11" height="11" viewBox="0 0 11 11"><circle cx="5.5" cy="5.5" r="3.9" fill="none" stroke="#5b8fdd" stroke-width="1.6"/></svg><span class="rt" style="left:781.8px;top:289.30px;">path1</span><svg class="a" style="left:756.80px;top:307.75px" width="6" height="8" viewBox="0 0 6 8"><path d="M1.4 1.2L4.4 4L1.4 6.8" fill="none" stroke="#c4c4c4" stroke-width="1.1"/></svg><svg class="a" style="left:765.80px;top:305.85px" width="12" height="11" viewBox="0 0 12 11"><path d="M1.2 1.6H4.6L5.8 3H10.8V9.6H1.2Z" fill="none" stroke="#5b8fdd" stroke-width="1.5" stroke-linejoin="round"/><path d="M1.2 4.6H10.8" stroke="#5b8fdd" stroke-width="1"/></svg><span class="rt" style="left:781.8px;top:307.35px;">g15</span>
<svg class="a" style="left:1256.60px;top:76.50px" width="12" height="12" viewBox="0 0 12 12"><path d="M2 1.4H6.8L9.4 4V10.6H2Z" fill="none" stroke="#f2f2f2" stroke-width="1.7" stroke-linejoin="round"/><circle cx="10.2" cy="1.8" r="1.2" fill="#2f9a44"/></svg><svg class="a" style="left:1257.50px;top:100.70px" width="13" height="11" viewBox="0 0 13 11"><path d="M0.8 1H5L6.2 2.6H11V4.4H3.2L1.4 9.6H0.8Z" fill="#f2f2f2"/><path d="M3.6 5.2H12.6L10.8 10H1.8Z" fill="#f2f2f2"/></svg><svg class="a" style="left:1258.00px;top:124.10px" width="12" height="13" viewBox="0 0 12 13"><path d="M6 0.6V6" stroke="#2f9a44" stroke-width="2"/><path d="M3.2 4.6L6 7.8L8.8 4.6Z" fill="#2f9a44"/><path d="M0.8 8.4H11.2V12H0.8Z" fill="#f2f2f2"/><path d="M2 8.2L3.4 6H8.6L10 8.2" fill="none" stroke="#f2f2f2" stroke-width="1"/></svg><svg class="a" style="left:1258.00px;top:149.00px" width="12" height="12" viewBox="0 0 12 12"><rect x="2.8" y="0.8" width="6.4" height="3" fill="#f2f2f2"/><rect x="0.6" y="4.2" width="10.8" height="4.4" rx=".8" fill="#f2f2f2"/><rect x="2.8" y="7.4" width="6.4" height="4" fill="#f2f2f2" stroke="#343434" stroke-width=".8"/></svg><svg class="a" style="left:1264px;top:177.00px" width="8" height="12" viewBox="0 0 8 12"><path d="M0 1.4H2.6Q5.4 1.4 5.4 4.2V8Q5.4 10.6 2.6 10.6H0" fill="none" stroke="#f2f2f2" stroke-width="2"/></svg><svg class="a" style="left:1264px;top:202.00px" width="8" height="12" viewBox="0 0 8 12"><path d="M0.6 2.4L4 6L0.6 9.6" fill="none" stroke="#2f9a44" stroke-width="2.2"/></svg><svg class="a" style="left:1264px;top:229.00px" width="8" height="12" viewBox="0 0 8 12"><path d="M0.4 3.6Q3.6 3.4 3.6 6Q3.6 8.4 0.4 8.4" fill="none" stroke="#e6e6e6" stroke-width="1.5"/></svg><svg class="a" style="left:1264px;top:252.00px" width="8" height="12" viewBox="0 0 8 12"><circle cx="1.6" cy="6" r="1.1" fill="#9a9a9a"/></svg><svg class="a" style="left:1264px;top:280.00px" width="8" height="12" viewBox="0 0 8 12"><path d="M0 3.4H2.6L3.6 1.8L5.6 3.6V10.6H0Z" fill="#f2f2f2"/></svg><svg class="a" style="left:1264px;top:305.00px" width="8" height="12" viewBox="0 0 8 12"><path d="M3.4 1.6Q0.8 3 1 6" fill="none" stroke="#e6e6e6" stroke-width="1.4"/><circle cx="2.2" cy="8.2" r="1.7" fill="none" stroke="#e6e6e6" stroke-width="1.3"/></svg><svg class="a" style="left:1264px;top:331.00px" width="8" height="12" viewBox="0 0 8 12"><path d="M0.4 1.6H4.4V10.4H0.4" fill="none" stroke="#f2f2f2" stroke-width="1.5"/><path d="M1.8 3.4V8.6" stroke="#d0d0d0" stroke-width="1.2"/></svg><svg class="a" style="left:1264px;top:357.00px" width="8" height="12" viewBox="0 0 8 12"><path d="M0 2.6Q3 1 4.2 3.6Q5.6 7 4.6 10H0Z" fill="#f2f2f2"/></svg><svg class="a" style="left:1264px;top:382.00px" width="8" height="12" viewBox="0 0 8 12"><path d="M0 2Q2.6 1.4 3.4 4.2L5.2 9.8H0Z" fill="#f2f2f2"/></svg><svg class="a" style="left:1264px;top:406.00px" width="8" height="12" viewBox="0 0 8 12"><path d="M0 2.4Q2.4 2 3 4.6Q3.2 7.6 5 10H0Z" fill="#f2f2f2"/></svg><svg class="a" style="left:1264px;top:430.00px" width="8" height="12" viewBox="0 0 8 12"><path d="M0.4 1.8H5M0.4 10.2H5M2.8 1.8V10.2" fill="none" stroke="#e6e6e6" stroke-width="1.4"/></svg><svg class="a" style="left:1257.50px;top:459.10px" width="13" height="13" viewBox="0 0 13 13"><rect x="1" y="1" width="7" height="7" fill="#f2f2f2"/><rect x="4.6" y="4.6" width="7.4" height="7.4" fill="#2fa24a" stroke="#343434" stroke-width=".8"/></svg><svg class="a" style="left:1257.50px;top:482.90px" width="13" height="13" viewBox="0 0 13 13"><rect x="1" y="1" width="7" height="7" fill="#f2f2f2"/><rect x="4.6" y="4.6" width="7.2" height="7.2" fill="#343434" stroke="#f2f2f2" stroke-width="1.4"/><rect x="7" y="7" width="2.6" height="2.6" fill="#f2f2f2"/></svg><svg class="a" style="left:1257.50px;top:507.50px" width="13" height="13" viewBox="0 0 13 13"><rect x="1" y="1" width="7" height="7" fill="#f2f2f2"/><rect x="4.6" y="4.6" width="7.2" height="7.2" fill="#343434" stroke="#f2f2f2" stroke-width="1.4"/><path d="M7 7L9.6 9.6M9.6 7L7 9.6" stroke="#f2f2f2" stroke-width="1"/></svg><svg class="a" style="left:1257.50px;top:535.10px" width="13" height="13" viewBox="0 0 13 13"><circle cx="6.2" cy="6.2" r="3.2" fill="#bdbdbd" stroke="#f2f2f2" stroke-width="1.3"/><path d="M8.6 8.6L11.4 11.4" stroke="#f2f2f2" stroke-width="1.7"/><path d="M0.8 3V0.8H3M10 0.8H12.2V3M0.8 10V12.2H3" fill="none" stroke="#2f9a44" stroke-width="1.2"/></svg><svg class="a" style="left:1257.50px;top:558.10px" width="13" height="13" viewBox="0 0 13 13"><circle cx="6.2" cy="6.2" r="3.2" fill="#9a9a9a" stroke="#f2f2f2" stroke-width="1.3"/><path d="M8.6 8.6L11.4 11.4" stroke="#f2f2f2" stroke-width="1.7"/><path d="M0.8 3V0.8H3M10 0.8H12.2V3M0.8 10V12.2H3M12.2 10V12.2H10" fill="none" stroke="#d8d8d8" stroke-width="1.1" stroke-dasharray="1.4 1"/></svg><div class="a" style="left:1252.6px;top:579.2px;width:21.8px;height:21.6px;background:#303030;border:1px solid #454545;border-radius:3px;box-sizing:border-box"></div><svg class="a" style="left:1259.60px;top:588.40px" width="8" height="6" viewBox="0 0 8 6"><path d="M1 1.2L4 4.2L7 1.2" fill="none" stroke="#e8e8e8" stroke-width="1.4"/></svg>
<svg class="a" style="left:1190px;top:149px" width="20" height="11" viewBox="0 0 20 11"><path d="M2.4 10L10 1.8L17.6 10Z" fill="#323232" stroke="#3d3d3d" stroke-width="1"/><rect x="0" y="9.6" width="20" height="2" fill="#323232"/></svg><div id="pop" class="a"></div><div class="a" style="left:1192.6px;top:158px;width:14.8px;height:1.6px;background:#323232"></div><svg class="tx" style="position:absolute;left:1134.60px;top:161.40px;overflow:visible;" width="52.00" height="26.00" viewBox="-6.00 0.00 52.00 26.00" role="img" aria-label="不透明度"><title>不透明度</title><text x="0" y="16" font-size="10" fill="#e9e9e9" textLength="40" lengthAdjust="spacingAndGlyphs">不透明度</text></svg><span class="t" style="left:1235px;top:184.6px;font-size:9.8px;color:#8a8a8a;letter-spacing:-0.2px">100%</span><div class="a" style="left:1147px;top:201.3px;width:101.5px;height:6.2px;border-radius:3.2px;background:#1c3560;border:1px solid #545454;box-sizing:border-box"></div><div class="a" style="left:1149px;top:211.4px;width:1px;height:3.2px;background:#bdbdbd"></div><div class="a" style="left:1197.6px;top:211.4px;width:1px;height:3.2px;background:#bdbdbd"></div><svg class="tx" style="position:absolute;left:1134.00px;top:225.00px;overflow:visible;" width="63.50" height="26.00" viewBox="-6.00 0.00 63.50 26.00" role="img" aria-label="ブレンドモード"><title>ブレンドモード</title><text x="0" y="16" font-size="10" fill="#e9e9e9" textLength="51.5" lengthAdjust="spacingAndGlyphs">ブレンドモード</text></svg><div class="rad" style="left:1143.60px;top:249.20px;background:#3b78d6;border-color:#3b78d6"></div><div class="a" style="left:1145.90px;top:251.50px;width:5px;height:5px;border-radius:50%;background:#fff"></div><svg class="tx" style="position:absolute;left:1151.00px;top:242.00px;overflow:visible;" width="32.00" height="25.72" viewBox="-6.00 0.00 32.00 25.72" role="img" aria-label="標準"><title>標準</title><text x="0" y="15.8" font-size="9.8" fill="#e4e4e4" textLength="20" lengthAdjust="spacingAndGlyphs">標準</text></svg><div class="rad" style="left:1143.60px;top:274.70px"></div><svg class="tx" style="position:absolute;left:1151.00px;top:267.50px;overflow:visible;" width="50.50" height="25.72" viewBox="-6.00 0.00 50.50 25.72" role="img" aria-label="比較 (暗)"><title>比較 (暗)</title><text x="0" y="15.8" font-size="9.8" fill="#e4e4e4" textLength="38.5" lengthAdjust="spacingAndGlyphs">比較 (暗)</text></svg><div class="rad" style="left:1143.60px;top:293.70px"></div><svg class="tx" style="position:absolute;left:1151.00px;top:286.50px;overflow:visible;" width="31.50" height="25.72" viewBox="-6.00 0.00 31.50 25.72" role="img" aria-label="乗算"><title>乗算</title><text x="0" y="15.8" font-size="9.8" fill="#e4e4e4" textLength="19.5" lengthAdjust="spacingAndGlyphs">乗算</text></svg><div class="rad" style="left:1218.20px;top:293.70px"></div><svg class="tx" style="position:absolute;left:1226.00px;top:286.50px;overflow:visible;" width="31.50" height="25.72" viewBox="-6.00 0.00 31.50 25.72" role="img" aria-label="差分"><title>差分</title><text x="0" y="15.8" font-size="9.8" fill="#e4e4e4" textLength="19.5" lengthAdjust="spacingAndGlyphs">差分</text></svg><div class="rad" style="left:1143.60px;top:312.10px"></div><svg class="tx" style="position:absolute;left:1151.00px;top:304.90px;overflow:visible;" width="48.00" height="25.72" viewBox="-6.00 0.00 48.00 25.72" role="img" aria-label="焼き込み"><title>焼き込み</title><text x="0" y="15.8" font-size="9.8" fill="#e4e4e4" textLength="36" lengthAdjust="spacingAndGlyphs">焼き込み</text></svg><div class="rad" style="left:1218.20px;top:312.10px"></div><svg class="tx" style="position:absolute;left:1226.00px;top:304.90px;overflow:visible;" width="31.50" height="25.72" viewBox="-6.00 0.00 31.50 25.72" role="img" aria-label="排他"><title>排他</title><text x="0" y="15.8" font-size="9.8" fill="#e4e4e4" textLength="19.5" lengthAdjust="spacingAndGlyphs">排他</text></svg><div class="rad" style="left:1143.60px;top:337.20px"></div><svg class="tx" style="position:absolute;left:1151.00px;top:330.00px;overflow:visible;" width="50.50" height="25.72" viewBox="-6.00 0.00 50.50 25.72" role="img" aria-label="比較 (明)"><title>比較 (明)</title><text x="0" y="15.8" font-size="9.8" fill="#e4e4e4" textLength="38.5" lengthAdjust="spacingAndGlyphs">比較 (明)</text></svg><div class="rad" style="left:1218.20px;top:337.20px"></div><svg class="tx" style="position:absolute;left:1226.00px;top:330.00px;overflow:visible;" width="31.50" height="25.72" viewBox="-6.00 0.00 31.50 25.72" role="img" aria-label="色相"><title>色相</title><text x="0" y="15.8" font-size="9.8" fill="#e4e4e4" textLength="19.5" lengthAdjust="spacingAndGlyphs">色相</text></svg><div class="rad" style="left:1143.60px;top:355.90px"></div><svg class="tx" style="position:absolute;left:1151.00px;top:348.70px;overflow:visible;" width="48.00" height="25.72" viewBox="-6.00 0.00 48.00 25.72" role="img" aria-label="スクリーン"><title>スクリーン</title><text x="0" y="15.8" font-size="9.8" fill="#e4e4e4" textLength="36" lengthAdjust="spacingAndGlyphs">スクリーン</text></svg><div class="rad" style="left:1218.20px;top:355.90px"></div><svg class="tx" style="position:absolute;left:1226.00px;top:348.70px;overflow:visible;" width="31.50" height="25.72" viewBox="-6.00 0.00 31.50 25.72" role="img" aria-label="彩度"><title>彩度</title><text x="0" y="15.8" font-size="9.8" fill="#e4e4e4" textLength="19.5" lengthAdjust="spacingAndGlyphs">彩度</text></svg><div class="rad" style="left:1143.60px;top:374.90px"></div><svg class="tx" style="position:absolute;left:1151.00px;top:367.70px;overflow:visible;" width="68.00" height="25.72" viewBox="-6.00 0.00 68.00 25.72" role="img" aria-label="覆い焼きカラー"><title>覆い焼きカラー</title><text x="0" y="15.8" font-size="9.8" fill="#e4e4e4" textLength="56" lengthAdjust="spacingAndGlyphs">覆い焼きカラー</text></svg><div class="rad" style="left:1218.20px;top:374.90px"></div><svg class="tx" style="position:absolute;left:1226.00px;top:367.70px;overflow:visible;" width="21.50" height="25.72" viewBox="-6.00 0.00 21.50 25.72" role="img" aria-label="色"><title>色</title><text x="0" y="15.8" font-size="9.8" fill="#e4e4e4" textLength="9.5" lengthAdjust="spacingAndGlyphs">色</text></svg><div class="rad" style="left:1143.60px;top:399.90px"></div><svg class="tx" style="position:absolute;left:1151.00px;top:392.70px;overflow:visible;" width="54.50" height="25.72" viewBox="-6.00 0.00 54.50 25.72" role="img" aria-label="オーバーレイ"><title>オーバーレイ</title><text x="0" y="15.8" font-size="9.8" fill="#e4e4e4" textLength="42.5" lengthAdjust="spacingAndGlyphs">オーバーレイ</text></svg><div class="rad" style="left:1218.20px;top:399.90px"></div><svg class="tx" style="position:absolute;left:1226.00px;top:392.70px;overflow:visible;" width="31.50" height="25.72" viewBox="-6.00 0.00 31.50 25.72" role="img" aria-label="輝度"><title>輝度</title><text x="0" y="15.8" font-size="9.8" fill="#e4e4e4" textLength="19.5" lengthAdjust="spacingAndGlyphs">輝度</text></svg><div class="rad" style="left:1143.60px;top:418.70px"></div><svg class="tx" style="position:absolute;left:1151.00px;top:411.50px;overflow:visible;" width="52.50" height="25.72" viewBox="-6.00 0.00 52.50 25.72" role="img" aria-label="ソフトライト"><title>ソフトライト</title><text x="0" y="15.8" font-size="9.8" fill="#e4e4e4" textLength="40.5" lengthAdjust="spacingAndGlyphs">ソフトライト</text></svg><div class="rad" style="left:1143.60px;top:437.30px"></div><svg class="tx" style="position:absolute;left:1151.00px;top:430.10px;overflow:visible;" width="54.00" height="25.72" viewBox="-6.00 0.00 54.00 25.72" role="img" aria-label="ハードライト"><title>ハードライト</title><text x="0" y="15.8" font-size="9.8" fill="#e4e4e4" textLength="42" lengthAdjust="spacingAndGlyphs">ハードライト</text></svg><svg class="a" style="left:1249px;top:203.5px" width="10" height="15" viewBox="0 0 10 15"><path d="M1 1V11.4L3.5 9.2L5.4 13.4L7.2 12.6L5.4 8.6H8.8Z" fill="#ffffff" stroke="#1a1a1a" stroke-width=".9" stroke-linejoin="round"/></svg>
<div id="hscroll" class="a"></div><div id="vscroll" class="a"></div>
<div class="a" style="left:728px;top:597.6px;width:2.4px;height:2.4px;border-radius:50%;background:#f0f0f0"></div>
<svg class="a" style="left:0;top:606px" width="270" height="46" viewBox="0 606 270 46"><rect x="0.8" y="607" width="43.4" height="44" fill="#ffffff"/><path d="M4.2 610.6L40.6 647M40.6 610.6L4.2 647" stroke="#c4143c" stroke-width="3" stroke-linecap="round"/><rect x="44.2" y="607.6" width="44" height="43.4" fill="#000"/><rect x="89" y="607.6" width="43.4" height="43.4" fill="#000"/><rect x="132.6" y="628.8" width="22" height="22.3" fill="#1c6cfa"/><rect x="154.6" y="628.8" width="22" height="22.3" fill="#22adb8"/><rect x="176.6" y="628.8" width="22" height="22.3" fill="#2a0c5e"/><circle cx="187.6" cy="640" r="6.3" fill="none" stroke="#d4a6f2" stroke-width="1.5"/><rect x="199" y="628.8" width="21.6" height="22.3" fill="#d05a45"/><rect x="221" y="628.8" width="21.8" height="22.3" fill="#d8264e"/><circle cx="231.6" cy="640" r="3.6" fill="#ffc9c9"/><circle cx="231.6" cy="640" r="5" fill="none" stroke="#e8607c" stroke-width="1.2" opacity=".55"/><rect x="243" y="628.8" width="21.4" height="22.3" fill="#ebf6fe"/></svg>
<div id="status" class="a"></div>
<svg class="tx" style="position:absolute;left:9.00px;top:647.20px;overflow:visible;" width="34.50" height="25.44" viewBox="-6.00 0.00 34.50 25.44" role="img" aria-label="フィル:"><title>フィル:</title><text x="0" y="15.6" font-size="9.6" fill="#e6e6e6" textLength="22.5" lengthAdjust="spacingAndGlyphs">フィル:</text></svg>
<svg class="tx" style="position:absolute;left:-5.60px;top:661.60px;overflow:visible;" width="49.00" height="25.44" viewBox="-6.00 0.00 49.00 25.44" role="img" aria-label="ストローク:"><title>ストローク:</title><text x="0" y="15.6" font-size="9.6" fill="#e6e6e6" textLength="37" lengthAdjust="spacingAndGlyphs">ストローク:</text></svg>
<div class="a" style="left:51px;top:651.6px;width:33px;height:14px;background:#d4264c"></div>
<div class="a" style="left:51px;top:665.6px;width:33px;height:14px;background:#2a0c5e"></div>
<span class="st" style="left:92px;top:669.2px">3.00</span>
<span class="st" style="left:117.2px;top:660.6px;color:#dcdcdc">O:</span>
<div class="sfld" style="left:130px;width:48.4px"></div>
<span class="st" style="left:136.2px;top:660.6px">100</span>
<svg class="a" style="left:156.60px;top:661.40px" width="22" height="10" viewBox="0 0 22 10"><path d="M0.3 5H8.7" stroke="#f4f4f4" stroke-width="1.6" fill="none"/><path d="M15.8 0.9V9.1M11.7 5H19.9" stroke="#6c6c6c" stroke-width="1.6" fill="none"/></svg>
<div class="a" style="left:185.6px;top:657.6px;width:2px;height:15.4px;background:#3f74d0;border-radius:1px"></div>
<span class="st" style="left:191.8px;top:660.8px;font-size:10.6px;transform-origin:0 50%;transform:scaleX(.9)">Layer 1</span>
<svg class="a" style="left:236.10px;top:661.00px" width="11" height="10" viewBox="0 0 11 10"><path d="M0.8 6Q5.5 1.4 10.2 6Q5.5 10.2 0.8 6Z" fill="none" stroke="#f2f2f2" stroke-width="1.4"/><circle cx="5.5" cy="6" r="1.7" fill="#f2f2f2"/><path d="M2.4 1.6L3.4 3.2M8.6 1.6L7.6 3.2" stroke="#f2f2f2" stroke-width="1.2"/></svg>
<svg class="a" style="left:260.70px;top:659.90px" width="11" height="11" viewBox="0 0 11 11"><path d="M5.2 5V3.2A2.1 2.1 0 0 1 9.4 3.2V3.8" fill="none" stroke="#f2f2f2" stroke-width="1.3"/><rect x="1" y="4.8" width="7" height="5.2" rx=".5" fill="#f2f2f2"/></svg>
<svg class="tx" style="position:absolute;left:277.00px;top:654.40px;overflow:visible;" width="84.00" height="25.44" viewBox="-6.00 0.00 84.00 25.44" role="img" aria-label="強調表示するには"><title>強調表示するには</title><text x="0" y="15.6" font-size="9.6" fill="#e9e9e9" textLength="72" lengthAdjust="spacingAndGlyphs">強調表示するには</text></svg>
<svg class="tx" style="position:absolute;left:351.80px;top:654.40px;overflow:visible;" width="27.80" height="25.44" viewBox="-6.00 0.00 27.80 25.44" role="img" aria-label="ALT"><title>ALT</title><text x="0" y="15.6" font-size="9.6" font-weight="bold" fill="#f2f2f2" textLength="15.6" lengthAdjust="spacingAndGlyphs">ALT</text></svg>
<svg class="tx" style="position:absolute;left:370.60px;top:654.40px;overflow:visible;" width="238.50" height="25.44" viewBox="-6.00 0.00 238.50 25.44" role="img" aria-label="を押しながら項目上にマウスを置き、非表示/ロックするには"><title>を押しながら項目上にマウスを置き、非表示/ロックするには</title><text x="0" y="15.6" font-size="9.6" fill="#e9e9e9" textLength="226.5" lengthAdjust="spacingAndGlyphs">を押しながら項目上にマウスを置き、非表示/ロックするには</text></svg>
<svg class="tx" style="position:absolute;left:601.00px;top:654.40px;overflow:visible;" width="37.40" height="25.44" viewBox="-6.00 0.00 37.40 25.44" role="img" aria-label="SHIFT"><title>SHIFT</title><text x="0" y="15.6" font-size="9.6" font-weight="bold" fill="#f2f2f2" textLength="25.2" lengthAdjust="spacingAndGlyphs">SHIFT</text></svg>
<svg class="tx" style="position:absolute;left:629.60px;top:654.40px;overflow:visible;" width="118.00" height="25.44" viewBox="-6.00 0.00 118.00 25.44" role="img" aria-label="を押しながらクリックします。"><title>を押しながらクリックします。</title><text x="0" y="15.6" font-size="9.6" fill="#e9e9e9" textLength="106" lengthAdjust="spacingAndGlyphs">を押しながらクリックします。</text></svg>
<span class="st" style="left:1065px;top:655.2px;color:#dcdcdc">X:</span><span class="st" style="left:1082.4px;top:655.2px">243.74</span>
<span class="st" style="left:1065px;top:668.8px;color:#dcdcdc">Y:</span><span class="st" style="left:1082.4px;top:668.8px">234.67</span>
<span class="st" style="left:1118.8px;top:661px;color:#dcdcdc">Z:</span>
<div class="sfld" style="left:1129px;width:61px"></div><span class="st" style="left:1140.6px;top:661px">93%</span>
<svg class="a" style="left:1168.40px;top:661.20px" width="22" height="10" viewBox="0 0 22 10"><path d="M0.3 5H8.7" stroke="#f4f4f4" stroke-width="1.6" fill="none"/><path d="M15.8 0.9V9.1M11.7 5H19.9" stroke="#f4f4f4" stroke-width="1.6" fill="none"/></svg>
<span class="st" style="left:1196.8px;top:661px;color:#dcdcdc">R:</span>
<div class="sfld" style="left:1207.5px;width:66px"></div><span class="st" style="left:1221.2px;top:661px">0.00°</span>
<svg class="a" style="left:1252.00px;top:661.20px" width="22" height="10" viewBox="0 0 22 10"><path d="M0.3 5H8.7" stroke="#f4f4f4" stroke-width="1.6" fill="none"/><path d="M15.8 0.9V9.1M11.7 5H19.9" stroke="#f4f4f4" stroke-width="1.6" fill="none"/></svg>
<svg class="a" style="left:1254.10px;top:615.80px" width="9" height="6" viewBox="0 0 9 6"><path d="M1 4.8L4.5 1.4L8 4.8" fill="none" stroke="#7a7a7a" stroke-width="1.2"/></svg>
<svg class="a" style="left:1254.10px;top:636.20px" width="9" height="6" viewBox="0 0 9 6"><path d="M1 1.2L4.5 4.6L8 1.2" fill="none" stroke="#7a7a7a" stroke-width="1.2"/></svg>
<svg class="a" style="left:1267.80px;top:637.70px" width="10" height="9" viewBox="0 0 10 9"><path d="M0.6 1.4H9.4M0.6 4.5H9.4M0.6 7.6H9.4" stroke="#f0f0f0" stroke-width="1.5"/></svg>
<div id="yline" class="a"></div><div id="black" class="a"></div>
<svg id="cap" class="a" style="left:740px;top:335px" width="410" height="70" viewBox="740 335 410 70" role="img" aria-label="不透明度を100%にする"><title>不透明度を100%にする</title>
<text x="757.2" y="380.2" font-size="34" font-weight="900" fill="#f6da7f" stroke="#000" stroke-width="6.2" stroke-linejoin="round" paint-order="stroke" textLength="370" lengthAdjust="spacingAndGlyphs">不透明度を100%にする</text>
</svg>
<svg class="a" style="left:965px;top:400px" width="275" height="120" viewBox="965 400 275 120" role="img" aria-label="初期費用ゼロからはじめてクリエイター"><title>初期費用 ゼロから はじめてクリエイター</title>
<text transform="translate(980.20 438.60) rotate(-14)" x="0" y="0" font-size="17.5" fill="#f4f4f4">初</text>
<text transform="translate(999.40 435.20) rotate(-12)" x="0" y="0" font-size="17.5" fill="#f4f4f4">期</text>
<text transform="translate(1019.60 430.40) rotate(-10)" x="0" y="0" font-size="17.5" fill="#f4f4f4">費</text>
<text transform="translate(1038.60 426.60) rotate(-8)" x="0" y="0" font-size="17.5" fill="#f4f4f4">用</text>
<path d="M976.9 441.9C981 446 986 447.6 991.3 446.9C999 445.6 1005 439 1011.3 436.4C1014.5 435.2 1017.6 435.6 1018.6 438.2C1019.4 440.6 1017 442 1015.6 440.2C1014.4 438.2 1016 436.6 1019 436.2C1024 435.6 1028 434.8 1032.5 433.7C1042 431.4 1050 429.6 1057.5 426.9C1063 424.6 1066 418 1067.6 410.4" fill="none" stroke="#f2f2f2" stroke-width="1" stroke-linecap="round"/>
<text x="1015.8" y="465" font-size="28" font-weight="bold" fill="#f8f8f8" textLength="58" lengthAdjust="spacingAndGlyphs">ゼロ</text>
<text x="1080.8" y="464.8" font-size="18.5" fill="#f4f4f4" textLength="36.5" lengthAdjust="spacingAndGlyphs">から</text>
<text x="1030.8" y="485.8" font-size="17" fill="#f4f4f4" textLength="71.5" lengthAdjust="spacingAndGlyphs">はじめて</text>
<text x="1107.8" y="486.4" font-size="18.8" font-weight="bold" fill="#fafafa" textLength="114" lengthAdjust="spacingAndGlyphs">クリエイター</text>
</svg>
<span class="t" style="left:1044.2px;top:499.4px;font-size:10.4px;color:#d2d2d2;letter-spacing:.41px">zero kara hajimete creator</span>
</body></html>
